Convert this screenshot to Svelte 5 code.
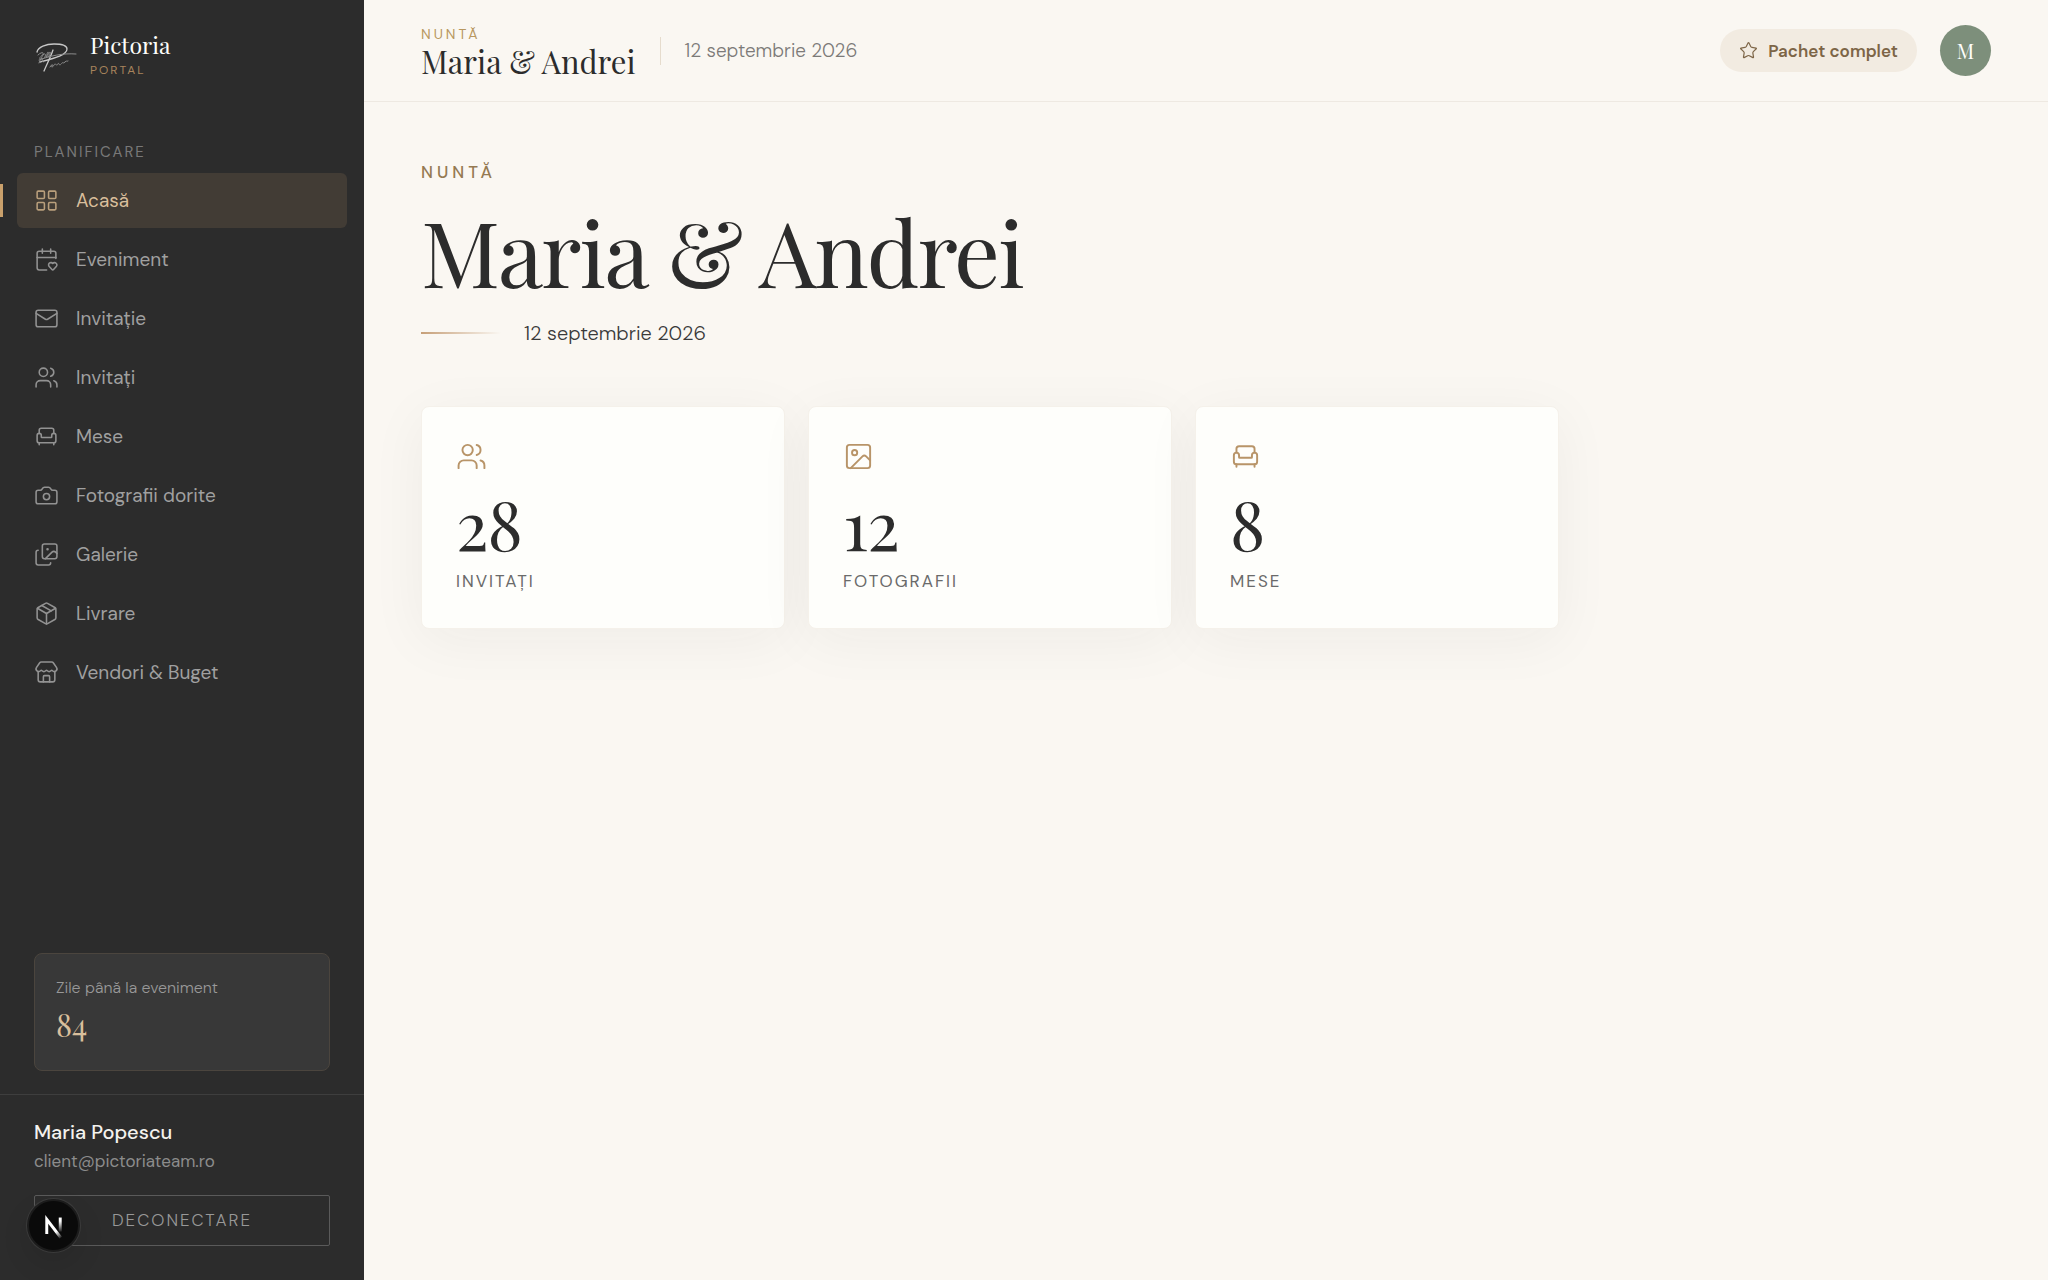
<script>
  const icons = {
    grid: ['M4 3h5a1 1 0 0 1 1 1v5a1 1 0 0 1-1 1H4a1 1 0 0 1-1-1V4a1 1 0 0 1 1-1z', 'M15 3h5a1 1 0 0 1 1 1v5a1 1 0 0 1-1 1h-5a1 1 0 0 1-1-1V4a1 1 0 0 1 1-1z', 'M15 14h5a1 1 0 0 1 1 1v5a1 1 0 0 1-1 1h-5a1 1 0 0 1-1-1v-5a1 1 0 0 1 1-1z', 'M4 14h5a1 1 0 0 1 1 1v5a1 1 0 0 1-1 1H4a1 1 0 0 1-1-1v-5a1 1 0 0 1 1-1z'],
    calendar: ['M12.127 22H5a2 2 0 0 1-2-2V6a2 2 0 0 1 2-2h14a2 2 0 0 1 2 2v5.125', 'M14.62 18.8A2.25 2.25 0 1 1 18 15.836a2.25 2.25 0 1 1 3.38 2.966l-2.626 2.856a.998.998 0 0 1-1.507 0z', 'M16 2v4', 'M3 10h18', 'M8 2v4'],
    mail: ['m22 7-8.991 5.727a2 2 0 0 1-2.009 0L2 7', 'M4 4h16a2 2 0 0 1 2 2v12a2 2 0 0 1-2 2H4a2 2 0 0 1-2-2V6a2 2 0 0 1 2-2z'],
    users: ['M16 21v-2a4 4 0 0 0-4-4H6a4 4 0 0 0-4 4v2', 'M16 3.128a4 4 0 0 1 0 7.744', 'M22 21v-2a4 4 0 0 0-3-3.87', 'M5 7a4 4 0 1 0 8 0a4 4 0 1 0-8 0'],
    armchair: ['M19 9V6a2 2 0 0 0-2-2H7a2 2 0 0 0-2 2v3', 'M3 16a2 2 0 0 0 2 2h14a2 2 0 0 0 2-2v-5a2 2 0 0 0-4 0v1.5a.5.5 0 0 1-.5.5h-9a.5.5 0 0 1-.5-.5V11a2 2 0 0 0-4 0z', 'M5 18v2', 'M19 18v2'],
    camera: ['M13.997 4a2 2 0 0 1 1.76 1.05l.486.9A2 2 0 0 0 18.003 7H20a2 2 0 0 1 2 2v9a2 2 0 0 1-2 2H4a2 2 0 0 1-2-2V9a2 2 0 0 1 2-2h1.997a2 2 0 0 0 1.759-1.048l.489-.904A2 2 0 0 1 10.004 4z', 'M9 13a3 3 0 1 0 6 0a3 3 0 1 0-6 0'],
    images: ['m22 11-1.296-1.296a2.4 2.4 0 0 0-3.408 0L11 16', 'M4 8a2 2 0 0 0-2 2v10a2 2 0 0 0 2 2h10a2 2 0 0 0 2-2', 'M12.5 7a.5.5 0 1 0 1 0a.5.5 0 1 0-1 0', 'M10 2h10a2 2 0 0 1 2 2v10a2 2 0 0 1-2 2H10a2 2 0 0 1-2-2V4a2 2 0 0 1 2-2z'],
    box: ['M11 21.73a2 2 0 0 0 2 0l7-4A2 2 0 0 0 21 16V8a2 2 0 0 0-1-1.73l-7-4a2 2 0 0 0-2 0l-7 4A2 2 0 0 0 3 8v8a2 2 0 0 0 1 1.73z', 'M12 22V12', 'M3.29 7 12 12 20.71 7', 'm7.5 4.27 9 5.15'],
    store: ['M15 21v-5a1 1 0 0 0-1-1h-4a1 1 0 0 0-1 1v5', 'M17.774 10.31a1.12 1.12 0 0 0-1.549 0 2.5 2.5 0 0 1-3.451 0 1.12 1.12 0 0 0-1.548 0 2.5 2.5 0 0 1-3.452 0 1.12 1.12 0 0 0-1.549 0 2.5 2.5 0 0 1-3.77-3.248l2.889-4.184A2 2 0 0 1 7 2h10a2 2 0 0 1 1.653.873l2.895 4.192a2.5 2.5 0 0 1-3.774 3.244', 'M4 10.95V19a2 2 0 0 0 2 2h12a2 2 0 0 0 2-2v-8.05'],
    image: ['M5 3h14a2 2 0 0 1 2 2v14a2 2 0 0 1-2 2H5a2 2 0 0 1-2-2V5a2 2 0 0 1 2-2z', 'M7 9a2 2 0 1 0 4 0a2 2 0 1 0-4 0', 'm21 15-3.086-3.086a2 2 0 0 0-2.828 0L6 21'],
    star: ['M11.525 2.295a.53.53 0 0 1 .95 0l2.31 4.679a2.123 2.123 0 0 0 1.595 1.16l5.166.756a.53.53 0 0 1 .294.904l-3.736 3.638a2.123 2.123 0 0 0-.611 1.878l.882 5.14a.53.53 0 0 1-.771.56l-4.618-2.428a2.122 2.122 0 0 0-1.973 0L6.396 21.01a.53.53 0 0 1-.77-.56l.881-5.139a2.122 2.122 0 0 0-.611-1.879L2.16 9.795a.53.53 0 0 1 .294-.906l5.165-.755a2.122 2.122 0 0 0 1.597-1.16z']
  };

  const nav = [
    { label: 'Acasă', icon: 'grid' },
    { label: 'Eveniment', icon: 'calendar' },
    { label: 'Invitație', icon: 'mail' },
    { label: 'Invitați', icon: 'users' },
    { label: 'Mese', icon: 'armchair' },
    { label: 'Fotografii dorite', icon: 'camera' },
    { label: 'Galerie', icon: 'images' },
    { label: 'Livrare', icon: 'box' },
    { label: 'Vendori & Buget', icon: 'store' }
  ];

  const stats = [
    { value: 28, label: 'Invitați', icon: 'users' },
    { value: 12, label: 'Fotografii', icon: 'image' },
    { value: 8, label: 'Mese', icon: 'armchair' }
  ];

  let active = $state('Acasă');
</script>

{#snippet icon(name)}
  <svg class="icon" viewBox="0 0 24 24" aria-hidden="true">
    {#each icons[name] as d}<path {d} />{/each}
  </svg>
{/snippet}

<div class="page">
  <aside class="sidebar">
    <a class="brand" href="#acasa">
      <svg class="mark" viewBox="0 0 44 32" aria-hidden="true">
        <path d="M3 11C4 6 12 3 20 3c7 0 13 1 13 5 0 6-12 9-27 13" />
        <path d="M19 9C17 15 13 23 10 30" />
        <path class="thin" d="M5 19C16 15 28 12 42 13" />
        <path class="thin" d="M4 14c3-3 6-3 5-1s-4 3-3 5 2-4 4-5 2 3 0 4M12 16c2-2 3-5 2-5s-2 6 0 5 3-5 2-5-2 5 0 5M5 22c1-3 2-5 3-5s-1 4 1 4" />
        <path class="thin" d="M16 26c2-3 3-3 2-1s1 1 2-1 2 0 3 0 1-3 2-1 2 0 3-1 1 1 3-1 1 0 3-1" />
      </svg>
      <span class="brand-text">
        <span class="brand-name">Pictoria</span>
        <span class="brand-sub">Portal</span>
      </span>
    </a>

    <nav class="nav" aria-label="Planificare">
      <p class="nav-title">Planificare</p>
      <ul>
        {#each nav as item}
          <li class:active={active === item.label}>
            <a href="#{item.icon}" onclick={() => (active = item.label)}>
              {@render icon(item.icon)}
              <span>{item.label}</span>
            </a>
          </li>
        {/each}
      </ul>
    </nav>

    <div class="countdown">
      <p class="countdown-label">Zile până la eveniment</p>
      <p class="countdown-value">84</p>
    </div>

    <div class="account">
      <p class="account-name">Maria Popescu</p>
      <p class="account-mail">client@pictoriateam.ro</p>
      <button class="logout" type="button">Deconectare</button>
    </div>
  </aside>

  <div class="content">
    <header class="topbar">
      <div class="event">
        <span class="event-type">Nuntă</span>
        <span class="event-name">Maria &amp; Andrei</span>
      </div>
      <span class="divider"></span>
      <span class="event-date">12 septembrie 2026</span>
      <span class="plan">{@render icon('star')}Pachet complet</span>
      <button class="avatar" type="button" aria-label="Contul Mariei">M</button>
    </header>

    <main class="main">
      <p class="eyebrow">Nuntă</p>
      <h1>Maria &amp; Andrei</h1>
      <div class="date-row">
        <span class="rule"></span>
        <span>12 septembrie 2026</span>
      </div>
      <div class="stats">
        {#each stats as stat}
          <article class="card">
            {@render icon(stat.icon)}
            <p class="value">{stat.value}</p>
            <p class="label">{stat.label}</p>
          </article>
        {/each}
      </div>
    </main>
  </div>

  <button class="dev" type="button" aria-label="Next.js">
    <svg viewBox="0 0 40 40" aria-hidden="true">
      <defs>
        <linearGradient id="n-diag" gradientUnits="userSpaceOnUse" x1="20" y1="21" x2="27" y2="30">
          <stop offset="0.4" stop-color="#fff" />
          <stop offset="1" stop-color="#fff" stop-opacity="0" />
        </linearGradient>
        <linearGradient id="n-stem" gradientUnits="userSpaceOnUse" x1="25" y1="14" x2="25" y2="26">
          <stop offset="0.2" stop-color="#fff" />
          <stop offset="1" stop-color="#fff" stop-opacity="0" />
        </linearGradient>
      </defs>
      <path d="M14.5 27V15L26 30" stroke="url(#n-diag)" />
      <path d="M25.5 13.5V25" stroke="url(#n-stem)" />
    </svg>
  </button>
</div>

<style>
  :global(body) {
    margin: 0;
    background: #faf7f2;
  }

  .page {
    display: flex;
    min-height: 100vh;
    color: #2c2c2c;
    font-family: 'DM Sans', Inter, 'Liberation Sans', sans-serif;
    font-size: 19px;
    font-weight: 400;
    line-height: 24px;
  }

  p,
  h1,
  ul {
    margin: 0;
    padding: 0;
  }

  ul {
    list-style: none;
  }

  a {
    color: inherit;
    text-decoration: none;
  }

  button {
    font: inherit;
    cursor: pointer;
  }

  .icon {
    flex: none;
    width: 25px;
    height: 25px;
    fill: none;
    stroke: currentColor;
    stroke-width: 1.5;
    stroke-linecap: round;
    stroke-linejoin: round;
  }

  .sidebar {
    position: sticky;
    top: 0;
    display: flex;
    flex: none;
    flex-direction: column;
    box-sizing: border-box;
    width: 364px;
    height: 100vh;
    background: #2c2c2c;
    color: #a0a0a0;
  }

  .brand {
    display: flex;
    align-items: center;
    gap: 12px;
    padding: 32px 34px 0;
  }

  .mark {
    width: 44px;
    height: 32px;
    fill: none;
    stroke: #c8c8c8;
    stroke-width: 1.3;
    stroke-linecap: round;
  }

  .mark .thin {
    stroke: #8c8c8c;
    stroke-width: 1;
  }

  .brand-text {
    display: flex;
    flex-direction: column;
  }

  .brand-name {
    color: #fefefb;
    font-family: 'Playfair Display', 'Liberation Serif', serif;
    font-size: 23px;
    line-height: 26px;
  }

  .brand-sub {
    color: #a8845c;
    font-size: 12px;
    line-height: 24px;
    letter-spacing: 2px;
    text-transform: uppercase;
  }

  .nav {
    flex: 1;
    padding: 59px 17px 0;
  }

  .nav-title {
    padding: 0 17px 10px;
    color: #787878;
    font-size: 15px;
    line-height: 22px;
    letter-spacing: 2px;
    text-transform: uppercase;
  }

  .nav ul {
    display: flex;
    flex-direction: column;
    gap: 4px;
  }

  .nav li {
    position: relative;
    border-radius: 6px;
  }

  .nav a {
    display: flex;
    align-items: center;
    gap: 17px;
    height: 55px;
    padding: 0 17px;
  }

  .nav .icon {
    color: #929292;
  }

  .nav .active {
    background: #423c35;
    color: #d9bf9c;
  }

  .nav .active .icon {
    color: #b99f7c;
  }

  .nav .active::before {
    content: '';
    position: absolute;
    top: 11px;
    left: -17px;
    width: 3px;
    height: 33px;
    background: #c9a06c;
  }

  .countdown {
    margin: 0 34px 23px;
    padding: 21px;
    border: 1px solid #4b453e;
    border-radius: 8px;
    background: #383838;
  }

  .countdown-label {
    color: #989898;
    font-size: 16px;
    font-weight: 300;
    line-height: 25px;
  }

  .countdown-value {
    padding: 3px 0;
    color: #d9bf9c;
    font-family: 'Playfair Display', 'Liberation Serif', serif;
    font-size: 31px;
    line-height: 43px;
  }

  .account {
    padding: 22px 34px 34px;
    border-top: 1px solid #3e3e3e;
  }

  .account-name {
    color: #f4f2ee;
    font-size: 20px;
    font-weight: 500;
    line-height: 30px;
  }

  .account-mail {
    color: #8c8c8c;
    font-size: 17px;
    line-height: 28px;
  }

  .logout {
    width: 100%;
    height: 51px;
    margin-top: 20px;
    padding: 0 0 2px;
    border: 1px solid #5a5a5a;
    border-radius: 2px;
    background: none;
    color: #989898;
    font-size: 17px;
    font-weight: 300;
    letter-spacing: 2px;
    text-transform: uppercase;
  }

  .content {
    flex: 1;
    min-width: 0;
  }

  .topbar {
    display: flex;
    align-items: center;
    box-sizing: border-box;
    height: 102px;
    padding: 0 57px;
    border-bottom: 1px solid #eee9e2;
  }

  .event {
    display: flex;
    flex-direction: column;
    padding-top: 2px;
  }

  .event-type {
    color: #b8975f;
    font-size: 14px;
    line-height: 18px;
    letter-spacing: 3px;
    text-transform: uppercase;
  }

  .event-name {
    font-family: 'Playfair Display', 'Liberation Serif', serif;
    font-size: 31px;
    line-height: 36px;
  }

  .divider {
    width: 1px;
    height: 28px;
    margin: 0 24px;
    background: #e6dccd;
  }

  .event-date {
    flex: 1;
    color: #7c7a78;
    font-weight: 300;
  }

  .plan {
    display: flex;
    align-items: center;
    gap: 10px;
    height: 43px;
    padding: 0 19px;
    border-radius: 22px;
    background: #f2ebe1;
    color: #7d6547;
    font-size: 17px;
    font-weight: 600;
  }

  .plan .icon {
    width: 19px;
    height: 19px;
  }

  .avatar {
    width: 51px;
    height: 51px;
    margin-left: 23px;
    padding: 0;
    border: 0;
    border-radius: 50%;
    background: #7d8f7b;
    color: #fefefb;
    font-family: 'Playfair Display', 'Liberation Serif', serif;
    font-size: 20px;
  }

  .main {
    padding: 57px;
  }

  .eyebrow {
    color: #957a52;
    font-size: 17px;
    font-weight: 500;
    line-height: 26px;
    letter-spacing: 4px;
    text-transform: uppercase;
  }

  h1 {
    padding-top: 16px;
    font-family: 'Playfair Display', 'Liberation Serif', serif;
    font-size: 91px;
    font-weight: 400;
    line-height: 100px;
    letter-spacing: -2px;
  }

  .date-row {
    display: flex;
    align-items: center;
    gap: 23px;
    padding-top: 17px;
    color: #3a3a3a;
    font-size: 20px;
    font-weight: 300;
    line-height: 30px;
  }

  .rule {
    width: 80px;
    height: 2px;
    background: linear-gradient(90deg, #c69f78, transparent);
  }

  .stats {
    display: grid;
    grid-template-columns: repeat(3, 1fr);
    gap: 23px;
    max-width: 1138px;
    padding-top: 58px;
  }

  .card {
    padding: 34px;
    border: 1px solid #f5f1ea;
    border-radius: 8px;
    background: #fefefb;
    box-shadow: 0 11px 57px rgba(44, 44, 44, 0.05);
  }

  .card .icon {
    display: block;
    width: 31px;
    height: 31px;
    color: #b89468;
  }

  .value {
    padding-top: 5px;
    font-family: 'Playfair Display', 'Liberation Serif', serif;
    font-size: 68px;
    line-height: 91px;
    letter-spacing: -1px;
  }

  .label {
    color: #6a6a6a;
    font-size: 17px;
    line-height: 26px;
    letter-spacing: 2px;
    text-transform: uppercase;
  }

  .dev {
    position: fixed;
    bottom: 28px;
    left: 27px;
    display: grid;
    place-items: center;
    width: 53px;
    height: 53px;
    padding: 0;
    border: 2px solid #1c1c1c;
    border-radius: 50%;
    background: #0a0a0a;
    box-shadow: 0 0 0 1px #3a3a3a, 0 12px 28px rgba(0, 0, 0, 0.1);
  }

  .dev svg {
    width: 49px;
    height: 49px;
    fill: none;
    stroke-width: 2.4;
  }
</style>
